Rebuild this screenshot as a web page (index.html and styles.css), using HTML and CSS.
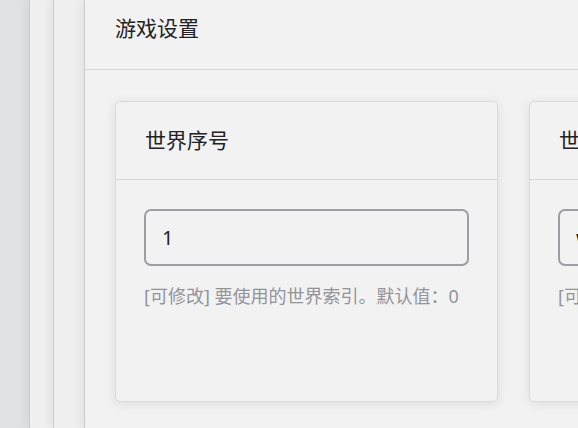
FILE: index.html
```html
<!DOCTYPE html>
<html lang="zh-CN">
<head>
  <meta charset="UTF-8" />
  <meta name="viewport" content="width=device-width, initial-scale=1.0"/>
  <title>游戏设置</title>
  <link rel="stylesheet" href="styles.css">
</head>
<body>
  <div class="layout">
    <div class="rail"></div>
    <div class="sheet sheet-back"></div>
    <div class="sheet sheet-mid"></div>

    <div class="main">
      <div class="page-header">
        <h1>游戏设置</h1>
      </div>

      <div class="settings">
        <div class="card">
          <div class="card-header">世界序号</div>
          <div class="card-body">
            <input type="text" class="field" value="1" />
            <p class="hint">[可修改] 要使用的世界索引。默认值：0</p>
          </div>
        </div>

        <div class="card">
          <div class="card-header">世界名称</div>
          <div class="card-body">
            <input type="text" class="field" value="world" />
            <p class="hint">[可修改] 要使用的世界名称。默认值：world</p>
          </div>
        </div>
      </div>
    </div>
  </div>
</body>
</html>
```

FILE: styles.css
```css
:root {
  --bg: #f2f2f2;
  --rail: #e1e2e4;
  --line: #d6d6d6;
  --edge: #c9cbce;
  --text-color: #222;
  --hint-color: #929499;
  --field-border: #9d9da3;
}

* {
  box-sizing: border-box;
  margin: 0;
  padding: 0;
}

html, body {
  height: 100%;
}

body {
  font-family: "Noto Sans", "Noto Sans CJK SC", sans-serif;
  background-color: var(--bg);
  color: var(--text-color);
  overflow: hidden;
}

.layout {
  display: flex;
  height: 100%;
}

.rail {
  width: 29px;
  flex-shrink: 0;
  background-color: var(--rail);
}

.sheet {
  flex-shrink: 0;
  background-color: #f0f0f0;
  border-left: 1px solid var(--edge);
  box-shadow: -4px 0 8px rgba(0, 0, 0, 0.05);
}

.sheet-back {
  width: 24px;
}

.sheet-mid {
  width: 31px;
}

.main {
  flex: 1;
  min-width: 0;
  background-color: var(--bg);
  border-left: 1px solid var(--edge);
  box-shadow: -5px 0 8px rgba(0, 0, 0, 0.05);
  overflow: hidden;
}

.page-header {
  height: 70px;
  padding: 13px 30px 0;
  border-bottom: 1px solid var(--line);
}

h1 {
  font-size: 21px;
  font-weight: 400;
  line-height: 30px;
}

.settings {
  display: grid;
  grid-template-columns: repeat(2, 383px);
  gap: 31px;
  padding: 31px 30px;
}

.card {
  height: 301px;
  background-color: var(--bg);
  border: 1px solid #dadada;
  border-radius: 5px;
  box-shadow: 0 2px 12px rgba(0, 0, 0, 0.09);
}

.card-header {
  height: 78px;
  padding: 0 29px;
  font-size: 21px;
  line-height: 77px;
  border-bottom: 1px solid var(--line);
}

.card-body {
  padding: 29px 28px;
}

.field {
  width: 100%;
  height: 57px;
  padding: 0 16px;
  border: 2px solid var(--field-border);
  border-radius: 7px;
  background-color: var(--bg);
  font-family: inherit;
  font-size: 20px;
  color: var(--text-color);
}

.field:focus {
  outline: none;
  border-color: #777;
}

.hint {
  margin-top: 18px;
  font-size: 18px;
  line-height: 24px;
  color: var(--hint-color);
  white-space: nowrap;
}
```
